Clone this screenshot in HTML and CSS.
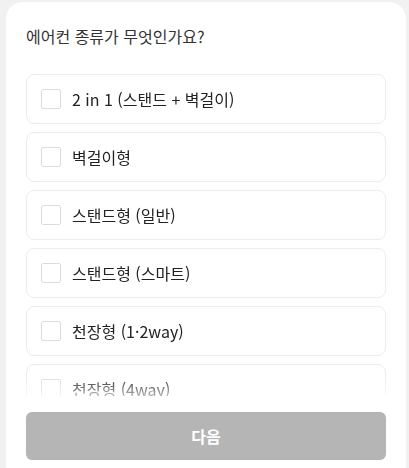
FILE: index.html
```html
<!DOCTYPE html>
<html lang="ko">
<head>
<meta charset="utf-8">
<link rel="stylesheet" href="styles.css">
</head>
<body>
<div class="card">
  <h1 class="title">에어컨 종류가 무엇인가요?</h1>
  <div class="list">
    <label class="option"><span class="check"></span><span class="label">2 in 1 (스탠드 + 벽걸이)</span></label>
    <label class="option"><span class="check"></span><span class="label">벽걸이형</span></label>
    <label class="option"><span class="check"></span><span class="label">스탠드형 (일반)</span></label>
    <label class="option"><span class="check"></span><span class="label">스탠드형 (스마트)</span></label>
    <label class="option"><span class="check"></span><span class="label">천장형 (1·2way)</span></label>
    <label class="option"><span class="check"></span><span class="label">천장형 (4way)</span></label>
  </div>
  <button class="next">다음</button>
</div>
</body>
</html>
```

FILE: styles.css
```css
* { box-sizing: border-box; }
html, body { margin: 0; padding: 0; }
body {
  background: #f1f1f1;
  font-family: "Noto Sans CJK KR", "Noto Sans", sans-serif;
  height: 468px;
  overflow: hidden;
}
.card {
  margin: 2px 3px 0 6px;
  height: 466px;
  background: #fff;
  border-radius: 17px 17px 0 0;
  padding: 23px 20px 8px;
  display: flex;
  flex-direction: column;
}
.title {
  margin: 0;
  font-size: 16px;
  line-height: 22px;
  font-weight: 400;
  color: #333;
}
.list {
  margin-top: 27px;
  height: 322px;
  overflow: hidden;
  display: flex;
  flex-direction: column;
  gap: 8px;
  -webkit-mask-image: linear-gradient(to bottom, #000 calc(100% - 20px), rgba(0,0,0,0.35) 100%);
  mask-image: linear-gradient(to bottom, #000 calc(100% - 20px), rgba(0,0,0,0.35) 100%);
}
.option {
  flex: none;
  height: 50px;
  border: 1px solid #ececec;
  border-radius: 8px;
  display: flex;
  align-items: center;
  padding-left: 14px;
  gap: 11px;
}
.check {
  width: 20px;
  height: 20px;
  border: 1px solid #dcdcdc;
  border-radius: 2px;
  background: #fff;
}
.label {
  font-size: 16px;
  color: #222;
  line-height: 22px;
}
.next {
  margin-top: 16px;
  height: 48px;
  border: none;
  border-radius: 6px;
  background: #b5b5b5;
  color: #fff;
  font-family: inherit;
  font-size: 16px;
  font-weight: 700;
}
```
